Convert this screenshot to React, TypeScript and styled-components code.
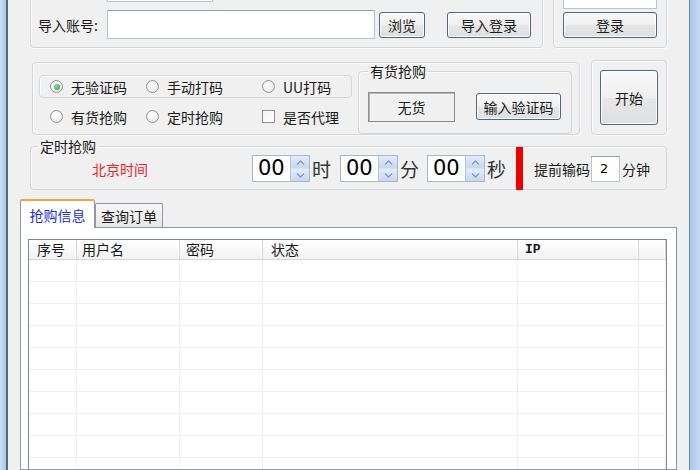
import React from "react";
import styled, { createGlobalStyle } from "styled-components";

const GlobalStyle = createGlobalStyle`
   html, body {
      margin: 0;
      padding: 0;
      width: 700px;
      height: 470px;
      overflow: hidden;
      background: #f0f0f0;
   }
   body {
      font-family: "Noto Sans CJK SC", "Microsoft YaHei", sans-serif;
      font-size: 14px;
      color: #1a1a1a;
   }
`;

const Window = styled.div`
   display: flex;
   width: 700px;
   height: 470px;
   overflow: hidden;
`;

const LeftFrame = styled.div`
   flex: none;
   width: 6px;
   background: linear-gradient(90deg, #cfe0f3, #a9c6e8);
   border-right: 2px solid #55687d;
`;

const RightFrame = styled.div`
   flex: none;
   width: 10px;
   background: linear-gradient(90deg, #a9c6e8, #c7dbf1);
   border-left: 1px solid #6a86a8;
`;

const Client = styled.div`
   flex: 1;
   min-width: 0;
   display: flex;
   flex-direction: column;
   padding: 0 12px;
   background: #f0f0f0;
`;

const Section = styled.div<{ $top: number; $gap: number }>`
   display: flex;
   gap: ${(p) => p.$gap}px;
   margin-top: ${(p) => p.$top}px;
   padding: 0 10px;
   flex: none;
`;

const Group = styled.div`
   border: 1px solid #d0d7dd;
   border-radius: 4px;
   box-shadow: inset 1px 1px 0 #fafafa, 1px 1px 0 #fafafa;
`;

const ImportGroup = styled(Group)`
   width: 513px;
   box-sizing: border-box;
   display: flex;
   flex-direction: column;
   gap: 8px;
   padding: 10px 11px 8px 7px;
`;

const LoginGroup = styled(Group)`
   flex: 1;
   display: flex;
   flex-direction: column;
   gap: 3px;
   padding: 17px 9px 9px 9px;
`;

const TextBox = styled.div<{ $w?: number; $h: number }>`
   box-sizing: border-box;
   width: ${(p) => (p.$w ? `${p.$w}px` : "auto")};
   height: ${(p) => p.$h}px;
   background: #fff;
   border: 1px solid #b7c4d3;
   border-top-color: #8ea1b6;
   flex: none;
`;

const CutInput = styled(TextBox)`
   margin-left: 69px;
`;

const ImportRow = styled.div`
   display: flex;
   align-items: center;
   height: 29px;
`;

const FieldLabel = styled.span`
   width: 69px;
   flex: none;
   white-space: nowrap;
`;

const Button = styled.button<{ $w?: number; $h: number; $ml?: number }>`
   box-sizing: border-box;
   flex: none;
   width: ${(p) => (p.$w ? `${p.$w}px` : "100%")};
   height: ${(p) => p.$h}px;
   margin-left: ${(p) => p.$ml ?? 0}px;
   padding: 0;
   font-family: inherit;
   font-size: 14px;
   color: #1a1a1a;
   border: 1px solid #4b6887;
   border-radius: 3px;
   background: linear-gradient(#f8f8f8 0%, #efefef 50%, #e6e6e6 51%, #dfdfdf 100%);
   box-shadow: inset 0 0 0 1px #fdfdfd;
`;

const OptionGroup = styled(Group)`
   width: 548px;
   height: 73px;
   box-sizing: border-box;
   margin-top: 2px;
   margin-left: 2px;
   padding: 0 8px 0 6px;
   display: flex;
   gap: 6px;
`;

const RadioBlock = styled.div`
   width: 313px;
   flex: none;
   margin-top: 12px;
   display: flex;
   flex-direction: column;
   gap: 7px;
`;

const RadioRow = styled.div<{ $boxed?: boolean }>`
   box-sizing: border-box;
   height: 23px;
   display: grid;
   grid-template-columns: 96px 116px auto;
   align-items: center;
   padding-left: ${(p) => (p.$boxed ? 10 : 11)}px;
   border: ${(p) => (p.$boxed ? "1px solid #d0d7dd" : "none")};
   border-radius: 4px;
   box-shadow: ${(p) => (p.$boxed ? "inset 1px 1px 0 #fafafa" : "none")};
`;

const Option = styled.label`
   display: flex;
   align-items: center;
   gap: 8px;
   white-space: nowrap;
`;

const RadioMark = styled.span<{ $checked?: boolean }>`
   box-sizing: border-box;
   width: 13px;
   height: 13px;
   border-radius: 50%;
   border: 1px solid #8e9296;
   background: radial-gradient(circle at 40% 35%, #ffffff, #e2e3e5);
   display: flex;
   align-items: center;
   justify-content: center;
   &::after {
      content: "";
      display: ${(p) => (p.$checked ? "block" : "none")};
      width: 6px;
      height: 6px;
      border-radius: 50%;
      background: radial-gradient(circle at 40% 35%, #8fe08f, #2c9a2c);
   }
`;

const CheckMark = styled.span`
   box-sizing: border-box;
   width: 13px;
   height: 13px;
   border: 1px solid #8e9296;
   background: linear-gradient(135deg, #f4f4f4, #ffffff);
`;

const Frame = styled.fieldset`
   margin: 0;
   border: 1px solid #d0d7dd;
   border-radius: 4px;
   box-shadow: inset 1px 1px 0 #fafafa;
   min-width: 0;
`;

const Legend = styled.legend<{ $lh: number; $ml: number }>`
   padding: 0 2px;
   margin-left: ${(p) => p.$ml}px;
   line-height: ${(p) => p.$lh}px;
   font-size: 14px;
`;

const StockFrame = styled(Frame)`
   width: 214px;
   box-sizing: border-box;
   flex: none;
   padding: 8px 0 7px 9px;
   display: flex;
   align-items: center;
   gap: 21px;
`;

const StatusBox = styled.div`
   box-sizing: border-box;
   width: 87px;
   height: 30px;
   border: 1px solid #888;
   box-shadow: inset 1px 1px 0 #b8b8b8;
   display: flex;
   align-items: center;
   justify-content: center;
`;

const StartGroup = styled(Group)`
   flex: 1;
   height: 75px;
   box-sizing: border-box;
   padding: 9px 8px;
   display: flex;
`;

const TimerFrame = styled(Frame)`
   margin: 2px 10px 0 10px;
   padding: 0 0 7px 0;
   display: flex;
   align-items: center;
   flex: none;
`;

const ClockLabel = styled.span`
   margin-left: 61px;
   width: 58px;
   color: #e8262c;
   white-space: nowrap;
`;

const Spinner = styled.div<{ $ml: number }>`
   box-sizing: border-box;
   width: 58px;
   height: 27px;
   margin-left: ${(p) => p.$ml}px;
   border: 1px solid #a9b8c9;
   background: #fff;
   display: flex;
   flex: none;
`;

const SpinValue = styled.span`
   flex: 1;
   padding-left: 5px;
   font-family: "DejaVu Sans", Verdana, sans-serif;
   font-size: 21px;
   line-height: 25px;
   color: #000;
`;

const SpinButtons = styled.div`
   width: 18px;
   display: flex;
   flex-direction: column;
   border-left: 1px solid #b3c6dd;
`;

const SpinHalf = styled.div`
   flex: 1;
   display: flex;
   align-items: center;
   justify-content: center;
   background: linear-gradient(#e3ecf8, #c6d7ee);
   & + & {
      border-top: 1px solid #d6e2f1;
   }
`;

const Unit = styled.span`
   margin-left: 2px;
   width: 20px;
   font-size: 19px;
   color: #333;
   white-space: nowrap;
`;

const RedBar = styled.div`
   align-self: stretch;
   width: 7px;
   margin: -8px 0 -8px 9px;
   background: #ee0000;
   flex: none;
`;

const Hint = styled.span<{ $ml: number }>`
   margin-left: ${(p) => p.$ml}px;
   white-space: nowrap;
`;

const MinuteBox = styled(TextBox)`
   margin-left: 1px;
   font-family: "DejaVu Sans", sans-serif;
   font-size: 13px;
   line-height: 24px;
   padding-left: 8px;
   color: #000;
`;

const TabBar = styled.div`
   display: flex;
   align-items: flex-end;
   height: 28px;
   margin-top: 9px;
   flex: none;
`;

const Tab = styled.div<{ $active?: boolean; $w: number }>`
   position: relative;
   z-index: ${(p) => (p.$active ? 2 : 1)};
   box-sizing: border-box;
   width: ${(p) => p.$w}px;
   height: ${(p) => (p.$active ? 29 : 24)}px;
   margin-bottom: ${(p) => (p.$active ? -1 : 0)}px;
   border: 1px solid #8d99a8;
   border-bottom: none;
   border-top: ${(p) => (p.$active ? "2px solid #f4a640" : "1px solid #8d99a8")};
   border-radius: 2px 2px 0 0;
   background: ${(p) => (p.$active ? "#ffffff" : "linear-gradient(#f7f7f7, #e6e6e6)")};
   color: ${(p) => (p.$active ? "#2130d6" : "#1a1a1a")};
   display: flex;
   align-items: center;
   justify-content: center;
   white-space: nowrap;
`;

const Panel = styled.div`
   flex: 1;
   min-height: 0;
   border: 1px solid #8d99a8;
   background: #fff;
   padding: 11px 9px 0 7px;
   display: flex;
   flex-direction: column;
`;

const Table = styled.div`
   flex: 1;
   border: 1px solid #828790;
   border-bottom: none;
   overflow: hidden;
`;

const COLUMNS = "48px 103px 83px 255px 121px 1fr";

const HeaderRow = styled.div`
   display: grid;
   grid-template-columns: ${COLUMNS};
   height: 19px;
   border-bottom: 1px solid #d5d5d5;
   background: linear-gradient(#ffffff, #f1f2f4);
`;

const HeaderCell = styled.div<{ $pl: number; $mono?: boolean }>`
   padding-left: ${(p) => p.$pl}px;
   border-right: 1px solid #d5d5d5;
   box-shadow: inset -1px 0 0 #fff;
   font-family: ${(p) => (p.$mono ? '"Liberation Mono", monospace' : "inherit")};
   font-size: ${(p) => (p.$mono ? 13 : 14)}px;
   font-weight: ${(p) => (p.$mono ? 700 : 400)};
   line-height: 19px;
   white-space: nowrap;
   overflow: hidden;
`;

const BodyRow = styled.div`
   display: grid;
   grid-template-columns: ${COLUMNS};
   height: 21px;
   border-bottom: 1px solid #f0f0f0;
`;

const BodyCell = styled.div`
   border-right: 1px solid #f0f0f0;
`;

const Chevron = ({ up }: { up?: boolean }) => (
   <svg width="9" height="5" viewBox="0 0 9 5">
      <path d={up ? "M1 4.5 L4.5 1 L8 4.5" : "M1 0.5 L4.5 4 L8 0.5"} fill="none" stroke="#7f9cc0" strokeWidth="1.3" />
   </svg>
);

const TimeSpinner = ({ ml }: { ml: number }) => (
   <Spinner $ml={ml}>
      <SpinValue>00</SpinValue>
      <SpinButtons>
         <SpinHalf>
            <Chevron up />
         </SpinHalf>
         <SpinHalf>
            <Chevron />
         </SpinHalf>
      </SpinButtons>
   </Spinner>
);

const headers = [
   { label: "序号", pl: 8 },
   { label: "用户名", pl: 5 },
   { label: "密码", pl: 6 },
   { label: "状态", pl: 8 },
   { label: "IP", pl: 7, mono: true },
   { label: "", pl: 0 },
];

const App = () => {
   const rows = Array.from({ length: 12 });

   return (
      <>
         <GlobalStyle />
         <Window>
            <LeftFrame />
            <Client>
               <Section $top={-31} $gap={10}>
                  <ImportGroup>
                     <CutInput $w={106} $h={22} />
                     <ImportRow>
                        <FieldLabel>导入账号:</FieldLabel>
                        <TextBox $w={268} $h={29} />
                        <Button $w={46} $h={26} $ml={4}>浏览</Button>
                        <Button $w={84} $h={26} $ml={22}>导入登录</Button>
                     </ImportRow>
                  </ImportGroup>
                  <LoginGroup>
                     <TextBox $h={22} />
                     <Button $h={26}>登录</Button>
                  </LoginGroup>
               </Section>

               <Section $top={12} $gap={11}>
                  <OptionGroup>
                     <RadioBlock>
                        <RadioRow $boxed>
                           <Option><RadioMark $checked />无验证码</Option>
                           <Option><RadioMark />手动打码</Option>
                           <Option><RadioMark />UU打码</Option>
                        </RadioRow>
                        <RadioRow>
                           <Option><RadioMark />有货抢购</Option>
                           <Option><RadioMark />定时抢购</Option>
                           <Option><CheckMark />是否代理</Option>
                        </RadioRow>
                     </RadioBlock>
                     <StockFrame>
                        <Legend $lh={16} $ml={0}>有货抢购</Legend>
                        <StatusBox>无货</StatusBox>
                        <Button $w={85} $h={27}>输入验证码</Button>
                     </StockFrame>
                  </OptionGroup>
                  <StartGroup>
                     <Button $h={55}>开始</Button>
                  </StartGroup>
               </Section>

               <TimerFrame>
                  <Legend $lh={18} $ml={7}>定时抢购</Legend>
                  <ClockLabel>北京时间</ClockLabel>
                  <TimeSpinner ml={102} />
                  <Unit>时</Unit>
                  <TimeSpinner ml={8} />
                  <Unit>分</Unit>
                  <TimeSpinner ml={7} />
                  <Unit>秒</Unit>
                  <RedBar />
                  <Hint $ml={11}>提前输码</Hint>
                  <MinuteBox $w={29} $h={26}>2</MinuteBox>
                  <Hint $ml={2}>分钟</Hint>
               </TimerFrame>

               <TabBar>
                  <Tab $active $w={75}>抢购信息</Tab>
                  <Tab $w={68}>查询订单</Tab>
               </TabBar>
               <Panel>
                  <Table>
                     <HeaderRow>
                        {headers.map((h, i) => (
                           <HeaderCell key={i} $pl={h.pl} $mono={h.mono}>
                              {h.label}
                           </HeaderCell>
                        ))}
                     </HeaderRow>
                     {rows.map((_, r) => (
                        <BodyRow key={r}>
                           {headers.map((_, c) => (
                              <BodyCell key={c} />
                           ))}
                        </BodyRow>
                     ))}
                  </Table>
               </Panel>
            </Client>
            <RightFrame />
         </Window>
      </>
   );
};

export default App;
